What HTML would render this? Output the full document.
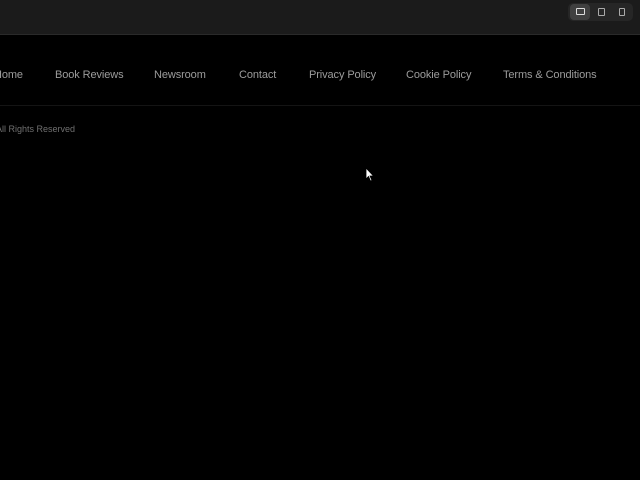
<!DOCTYPE html>
<html><head><style>
body{margin:0;width:640px;height:480px;background:#000;overflow:hidden;font-family:"Liberation Sans",sans-serif;position:relative}
.top{position:absolute;left:0;top:0;width:640px;height:34px;background:#1b1b1b;border-bottom:1px solid #2a2a2a}
.sw{position:absolute;left:568px;top:3px;width:65px;height:18px;background:#262626;border-radius:5px}
.sw .a{position:absolute;left:2px;top:1px;width:20px;height:16px;background:#404040;border-radius:4px}
.ic{position:absolute;border:1px solid #aaa;border-radius:1px}
.nav span{position:absolute;top:69px;font-size:11px;color:#9c9c9c;white-space:nowrap;letter-spacing:-0.1px}
.line{position:absolute;left:0;top:105px;width:640px;height:1px;background:#141414}
.foot{position:absolute;left:-4px;top:124px;font-size:9px;color:#707070}
</style></head><body>
<div class="top"><div class="sw"><div class="a"></div>
<div class="ic" style="left:8px;top:5px;width:7px;height:5px;border-color:#ddd"></div>
<div class="ic" style="left:30px;top:5px;width:5px;height:6px"></div>
<div class="ic" style="left:51px;top:5px;width:4px;height:6px"></div></div></div>
<div class="nav">
<span style="left:-6px">Home</span>
<span style="left:55px">Book Reviews</span>
<span style="left:154px">Newsroom</span>
<span style="left:239px">Contact</span>
<span style="left:309px">Privacy Policy</span>
<span style="left:406px">Cookie Policy</span>
<span style="left:503px">Terms &amp; Conditions</span>
</div>
<div class="line"></div>
<div class="foot">All Rights Reserved</div>
<svg style="position:absolute;left:365px;top:167px" width="10" height="15" viewBox="0 0 10 15"><path d="M1 1 L1 12 L3.5 9.5 L5.5 14 L7 13.3 L5 9 L8.5 9 Z" fill="#fff" stroke="#000" stroke-width="0.8"/></svg>
</body></html>
